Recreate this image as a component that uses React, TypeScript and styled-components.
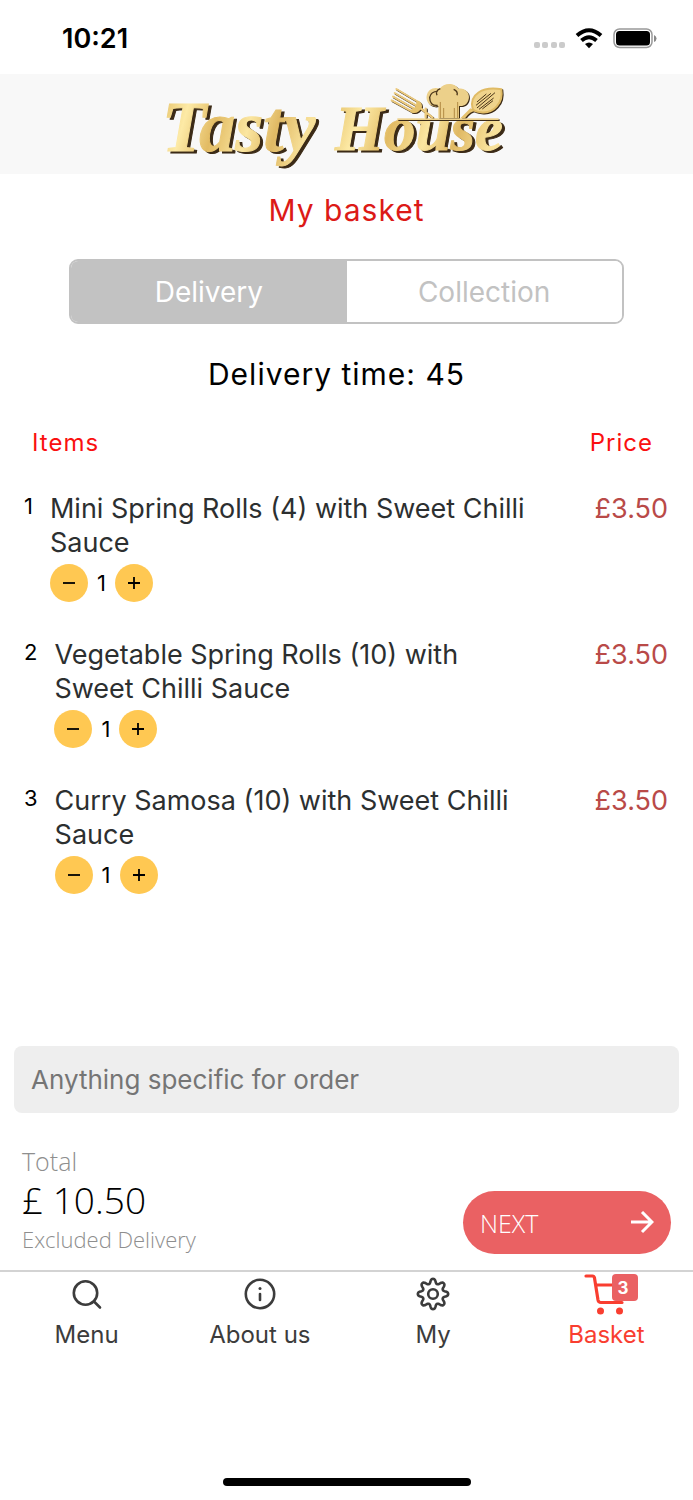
import React, { useState } from 'react';
import styled, { createGlobalStyle } from 'styled-components';

const GlobalStyle = createGlobalStyle`
  *, *::before, *::after { box-sizing: border-box; }
  body {
    margin: 0;
    background: #fff;
    color: #000;
    font-family: Inter, "Liberation Sans", sans-serif;
  }
  button, input { font: inherit; color: inherit; }
  button { border: 0; padding: 0; background: none; cursor: pointer; }
`;

const Screen = styled.div`
  display: flex;
  flex-direction: column;
  min-height: 100vh;
`;

const StatusBar = styled.div`
  display: flex;
  align-items: center;
  justify-content: space-between;
  height: 74px;
  padding: 3px 36px 0 62px;
  font-size: 27px;
  font-weight: 600;
`;

const StatusIcons = styled.svg`
  width: 124px;
  height: 24px;
`;

const Brand = styled.header`
  display: flex;
  justify-content: center;
  height: 100px;
  padding-right: 26px;
  background: #f8f8f8;
`;

const LogoArt = styled.svg`
  width: 346px;
  height: 100px;
`;

const Wordmark = styled.text<{ $size: number }>`
  font-family: "Liberation Serif", serif;
  font-size: ${p => p.$size}px;
  font-weight: 700;
  font-style: italic;
  fill: url(#gold);
  stroke: url(#gold);
  stroke-width: 1px;
  filter: drop-shadow(3px 2px 0 #3b2a16);
`;

const Utensils = styled.g`
  filter: drop-shadow(3px 3px 0 #3b2a16);
`;

const Title = styled.h1`
  margin: 16px 0 29px;
  font-size: 30px;
  line-height: 40px;
  font-weight: 400;
  letter-spacing: 1px;
  text-align: center;
  color: #dc1a17;
`;

const Segments = styled.div`
  display: flex;
  height: 65px;
  margin: 0 10%;
  border: 2px solid #c2c2c2;
  border-radius: 9px;
  overflow: hidden;
`;

const Segment = styled.button<{ $active: boolean }>`
  flex: 1;
  font-size: 28px;
  color: ${p => (p.$active ? '#fff' : '#c2c2c2')};
  background: ${p => (p.$active ? '#c2c2c2' : '#fff')};
`;

const DeliveryTime = styled.p`
  margin: 30px 0 29px;
  padding-right: 20px;
  font-size: 30px;
  line-height: 40px;
  letter-spacing: 1px;
  text-align: center;
`;

const ListHeader = styled.div`
  display: flex;
  justify-content: space-between;
  padding: 0 40px 0 32px;
  font-size: 24px;
  line-height: 40px;
  letter-spacing: 1px;
  color: #fa1010;
`;

const Basket = styled.ol`
  flex: 1;
  margin: 29px 0 0;
  padding: 0 25px 0 24px;
  list-style: none;
`;

const Line = styled.li`
  display: flex;
  align-items: flex-start;
  padding-bottom: 36px;
`;

const LineNumber = styled.span`
  margin-right: 17px;
  font-size: 22px;
  line-height: 28px;
`;

const LineBody = styled.div`
  flex: 1;
  margin-right: 70px;
`;

const LineName = styled.div`
  font-size: 27px;
  line-height: 34px;
  color: #2c2f30;
`;

const LinePrice = styled.span`
  font-size: 27px;
  line-height: 34px;
  color: #b94a48;
`;

const Quantity = styled.div`
  display: flex;
  align-items: center;
  gap: 9px;
  margin-top: 4px;
  font-size: 22px;
`;

const Step = styled.button`
  display: grid;
  place-items: center;
  width: 38px;
  height: 38px;
  border-radius: 50%;
  background: #ffc852;
`;

const Note = styled.input`
  height: 67px;
  margin: 0 14px;
  padding: 0 17px;
  border: 0;
  border-radius: 8px;
  background: #eee;
  font-size: 26px;
  &::placeholder { color: #757575; opacity: 1; }
`;

const Checkout = styled.div`
  display: flex;
  justify-content: space-between;
  align-items: flex-end;
  padding: 31px 22px 14px;
  font-family: "Open Sans", sans-serif;
  font-weight: 300;
`;

const Caption = styled.div<{ $size: number }>`
  font-size: ${p => p.$size}px;
  line-height: 34px;
  color: #8e8e8e;
`;

const Total = styled.div`
  font-size: 37px;
  line-height: 44px;
`;

const Next = styled.button`
  display: flex;
  align-items: center;
  justify-content: space-between;
  width: 208px;
  height: 63px;
  margin-bottom: 2px;
  padding: 0 17px;
  border-radius: 32px;
  font-size: 25px;
  color: #fff;
  background: #ea6163;
`;

const TabBar = styled.nav`
  display: grid;
  grid-template-columns: repeat(4, 1fr);
  height: 208px;
  border-top: 2px solid #d3d3d3;
`;

const Tab = styled.a<{ $active?: boolean }>`
  display: flex;
  flex-direction: column;
  align-items: center;
  font-size: 24px;
  line-height: 36px;
  text-decoration: none;
  color: ${p => (p.$active ? '#f93e30' : '#3c3c3c')};
`;

const TabIcon = styled.span`
  position: relative;
  width: 48px;
  height: 45px;
  svg { display: block; }
`;

const Badge = styled.span`
  position: absolute;
  top: 2px;
  right: -8px;
  width: 26px;
  height: 27px;
  border-radius: 4px;
  padding-right: 5px;
  text-align: center;
  font-size: 17px;
  line-height: 28px;
  font-weight: 700;
  color: #fff;
  background: #ea6163;
`;

const HomeIndicator = styled.div`
  width: 248px;
  height: 8px;
  margin: 0 auto 14px;
  border-radius: 4px;
  background: #000;
`;

const Logo = () => (
  <LogoArt viewBox="0 0 346 100" role="img" aria-label="Tasty House">
    <defs>
      <linearGradient id="gold" x1="0" x2="1" y1="0" y2="0.15">
        <stop offset="0" stopColor="#e3bd62" />
        <stop offset="0.2" stopColor="#fdeaa6" />
        <stop offset="0.4" stopColor="#e2bb63" />
        <stop offset="0.62" stopColor="#fbe6a0" />
        <stop offset="0.8" stopColor="#e0b964" />
        <stop offset="1" stopColor="#f8e19a" />
      </linearGradient>
    </defs>
    <Wordmark $size={72} x="1" y="77">Tasty</Wordmark>
    <Wordmark $size={63} x="174" y="76">House</Wordmark>
    <Utensils transform="translate(224 6) scale(0.3333)">
      <g stroke="#ecca7d" strokeWidth="6" strokeLinecap="round" fill="none">
        <path d="M34 27L100 66M29 39L93 76M24 50L86 85M20 61L80 94" />
        <path d="M108 86L142 112M122 86L122 112" strokeWidth="7" />
      </g>
      <path d="M100 62q14 6 10 22-12 20-30 14l-6-8q22-4 20-24z" fill="#e6c26d" />
      <path d="M160 114V78C136 84 122 66 125 48 128 28 146 20 164 26 176 6 212 8 220 26 240 22 256 38 251 58 248 72 238 80 222 78V114Z" fill="#ecd08a" />
      <path d="M158 76Q134 78 134 52 138 34 158 34M166 26Q150 32 156 46M206 28Q220 34 216 46" fill="none" stroke="#4a3519" strokeWidth="4" />
      <path d="M166 114V66M176 114V84M208 114V84M218 114V66" stroke="#b28b43" strokeWidth="3" fill="none" />
      <path d="M226 115L256 85L272 93Q256 93 240 115Z" fill="#e6c26d" />
      <path d="M263 86C252 44 292 18 349 28 356 68 326 102 288 97 274 96 266 92 263 86Z" fill="#f0d48c" stroke="#e0bb65" strokeWidth="6" />
      <path d="M276 84L330 38M273 76L318 40M282 88L326 54M276 66L304 42M292 87L324 62" stroke="#4a3519" strokeWidth="3" />
      <rect x="37" y="115" width="304" height="5" fill="#ecd08a" />
    </Utensils>
  </LogoArt>
);

const gearPath = () => {
  const points: string[] = [];
  for (let i = 0; i < 128; i++) {
    const a = (i / 128) * Math.PI * 2;
    const r = 12.9 + 2.7 * Math.tanh(1.2 * Math.cos(8 * a));
    points.push(`${(24 + r * Math.sin(a)).toFixed(2)} ${(22 - r * Math.cos(a)).toFixed(2)}`);
  }
  return `M${points.join('L')}Z`;
};

const Icon = ({ children }: { children: React.ReactNode }) => (
  <svg width="48" height="45" viewBox="0 0 48 45" fill="none" stroke="currentColor" strokeWidth="2.6" strokeLinecap="round" strokeLinejoin="round" aria-hidden="true">
    {children}
  </svg>
);

const items = [
  { name: 'Mini Spring Rolls (4) with Sweet Chilli Sauce', price: 3.5 },
  { name: 'Vegetable Spring Rolls (10) with Sweet Chilli Sauce', price: 3.5 },
  { name: 'Curry Samosa (10) with Sweet Chilli Sauce', price: 3.5 },
];

export default function App() {
  const [mode, setMode] = useState('Delivery');
  const [counts, setCounts] = useState(items.map(() => 1));
  const change = (index: number, by: number) =>
    setCounts(counts.map((c, i) => (i === index ? Math.max(0, c + by) : c)));
  const total = items.reduce((sum, item, i) => sum + item.price * counts[i], 0);

  return (
    <Screen>
      <GlobalStyle />
      <StatusBar>
        <span>10:21</span>
        <StatusIcons viewBox="0 0 124 24" aria-hidden="true">
          <g fill="#cbcbcb">
            <rect x="1" y="15" width="6" height="6" rx="2" />
            <rect x="9" y="15" width="6" height="6" rx="2" />
            <rect x="18" y="15" width="6" height="6" rx="2" />
            <rect x="26" y="15" width="6" height="6" rx="2" />
          </g>
          <g fill="none" stroke="#000" strokeWidth="4">
            <path d="M44 8.5q12-10.500 24 0" />
            <path d="M48.500 13.500q7.500-6.500 15 0" />
          </g>
          <path d="M52 17q4-3 8 0l-4 4.200z" />
          <rect x="81" y="2" width="38" height="18.500" rx="5.500" fill="none" stroke="#999" strokeWidth="1.500" />
          <rect x="83" y="4" width="34" height="14.500" rx="3.500" />
          <path d="M121 8q2.500 1 2.500 3.500t-2.500 3.500z" fill="#888" />
        </StatusIcons>
      </StatusBar>
      <Brand><Logo /></Brand>
      <Title>My basket</Title>
      <Segments role="group" aria-label="Order type">
        {['Delivery', 'Collection'].map(m => (
          <Segment key={m} $active={mode === m} aria-pressed={mode === m} onClick={() => setMode(m)}>{m}</Segment>
        ))}
      </Segments>
      <DeliveryTime>Delivery time: 45</DeliveryTime>
      <ListHeader><span>Items</span><span>Price</span></ListHeader>
      <Basket>
        {items.map((item, i) => (
          <Line key={item.name}>
            <LineNumber>{i + 1}</LineNumber>
            <LineBody>
              <LineName>{item.name}</LineName>
              <Quantity>
                <Step aria-label={`Remove one ${item.name}`} onClick={() => change(i, -1)}>
                  <svg width="14" height="14" stroke="#000" strokeWidth="1.800"><path d="M1 7h12" /></svg>
                </Step>
                <span>{counts[i]}</span>
                <Step aria-label={`Add one ${item.name}`} onClick={() => change(i, 1)}>
                  <svg width="14" height="14" stroke="#000" strokeWidth="1.800"><path d="M1 7h12M7 1v12" /></svg>
                </Step>
              </Quantity>
            </LineBody>
            <LinePrice>£{item.price.toFixed(2)}</LinePrice>
          </Line>
        ))}
      </Basket>
      <Note aria-label="Order note" placeholder="Anything specific for order" />
      <Checkout>
        <div>
          <Caption $size={25}>Total</Caption>
          <Total>£ {total.toFixed(2)}</Total>
          <Caption $size={22}>Excluded Delivery</Caption>
        </div>
        <Next>
          <span>NEXT</span>
          <svg width="24" height="24" fill="none" stroke="#fff" strokeWidth="3" aria-hidden="true"><path d="M1 11h20M12 1l10 10-10 10" /></svg>
        </Next>
      </Checkout>
      <TabBar>
        <Tab href="#menu">
          <TabIcon><Icon><circle cx="22.500" cy="21" r="11.700" /><path d="M31 29.500l6 6" /></Icon></TabIcon>
          Menu
        </Tab>
        <Tab href="#about">
          <TabIcon><Icon><circle cx="24" cy="22" r="14.200" /><path d="M24 22v6" /><circle cx="24" cy="16.500" r="1.500" fill="currentColor" stroke="none" /></Icon></TabIcon>
          About us
        </Tab>
        <Tab href="#my">
          <TabIcon><Icon><path d={gearPath()} /><circle cx="24" cy="22" r="4.800" /></Icon></TabIcon>
          My
        </Tab>
        <Tab href="#basket" $active>
          <TabIcon>
            <Icon>
              <path d="M4 4h6.500q1.500 0 2 2l3.500 22q.5 2.500 3 2.500h21M14 13h28l-3 13" strokeWidth="3.200" />
              <circle cx="18.500" cy="39" r="3.500" fill="currentColor" stroke="none" />
              <circle cx="37.500" cy="39" r="3.500" fill="currentColor" stroke="none" />
            </Icon>
            <Badge>{items.length}</Badge>
          </TabIcon>
          Basket
        </Tab>
      </TabBar>
      <HomeIndicator />
    </Screen>
  );
}
